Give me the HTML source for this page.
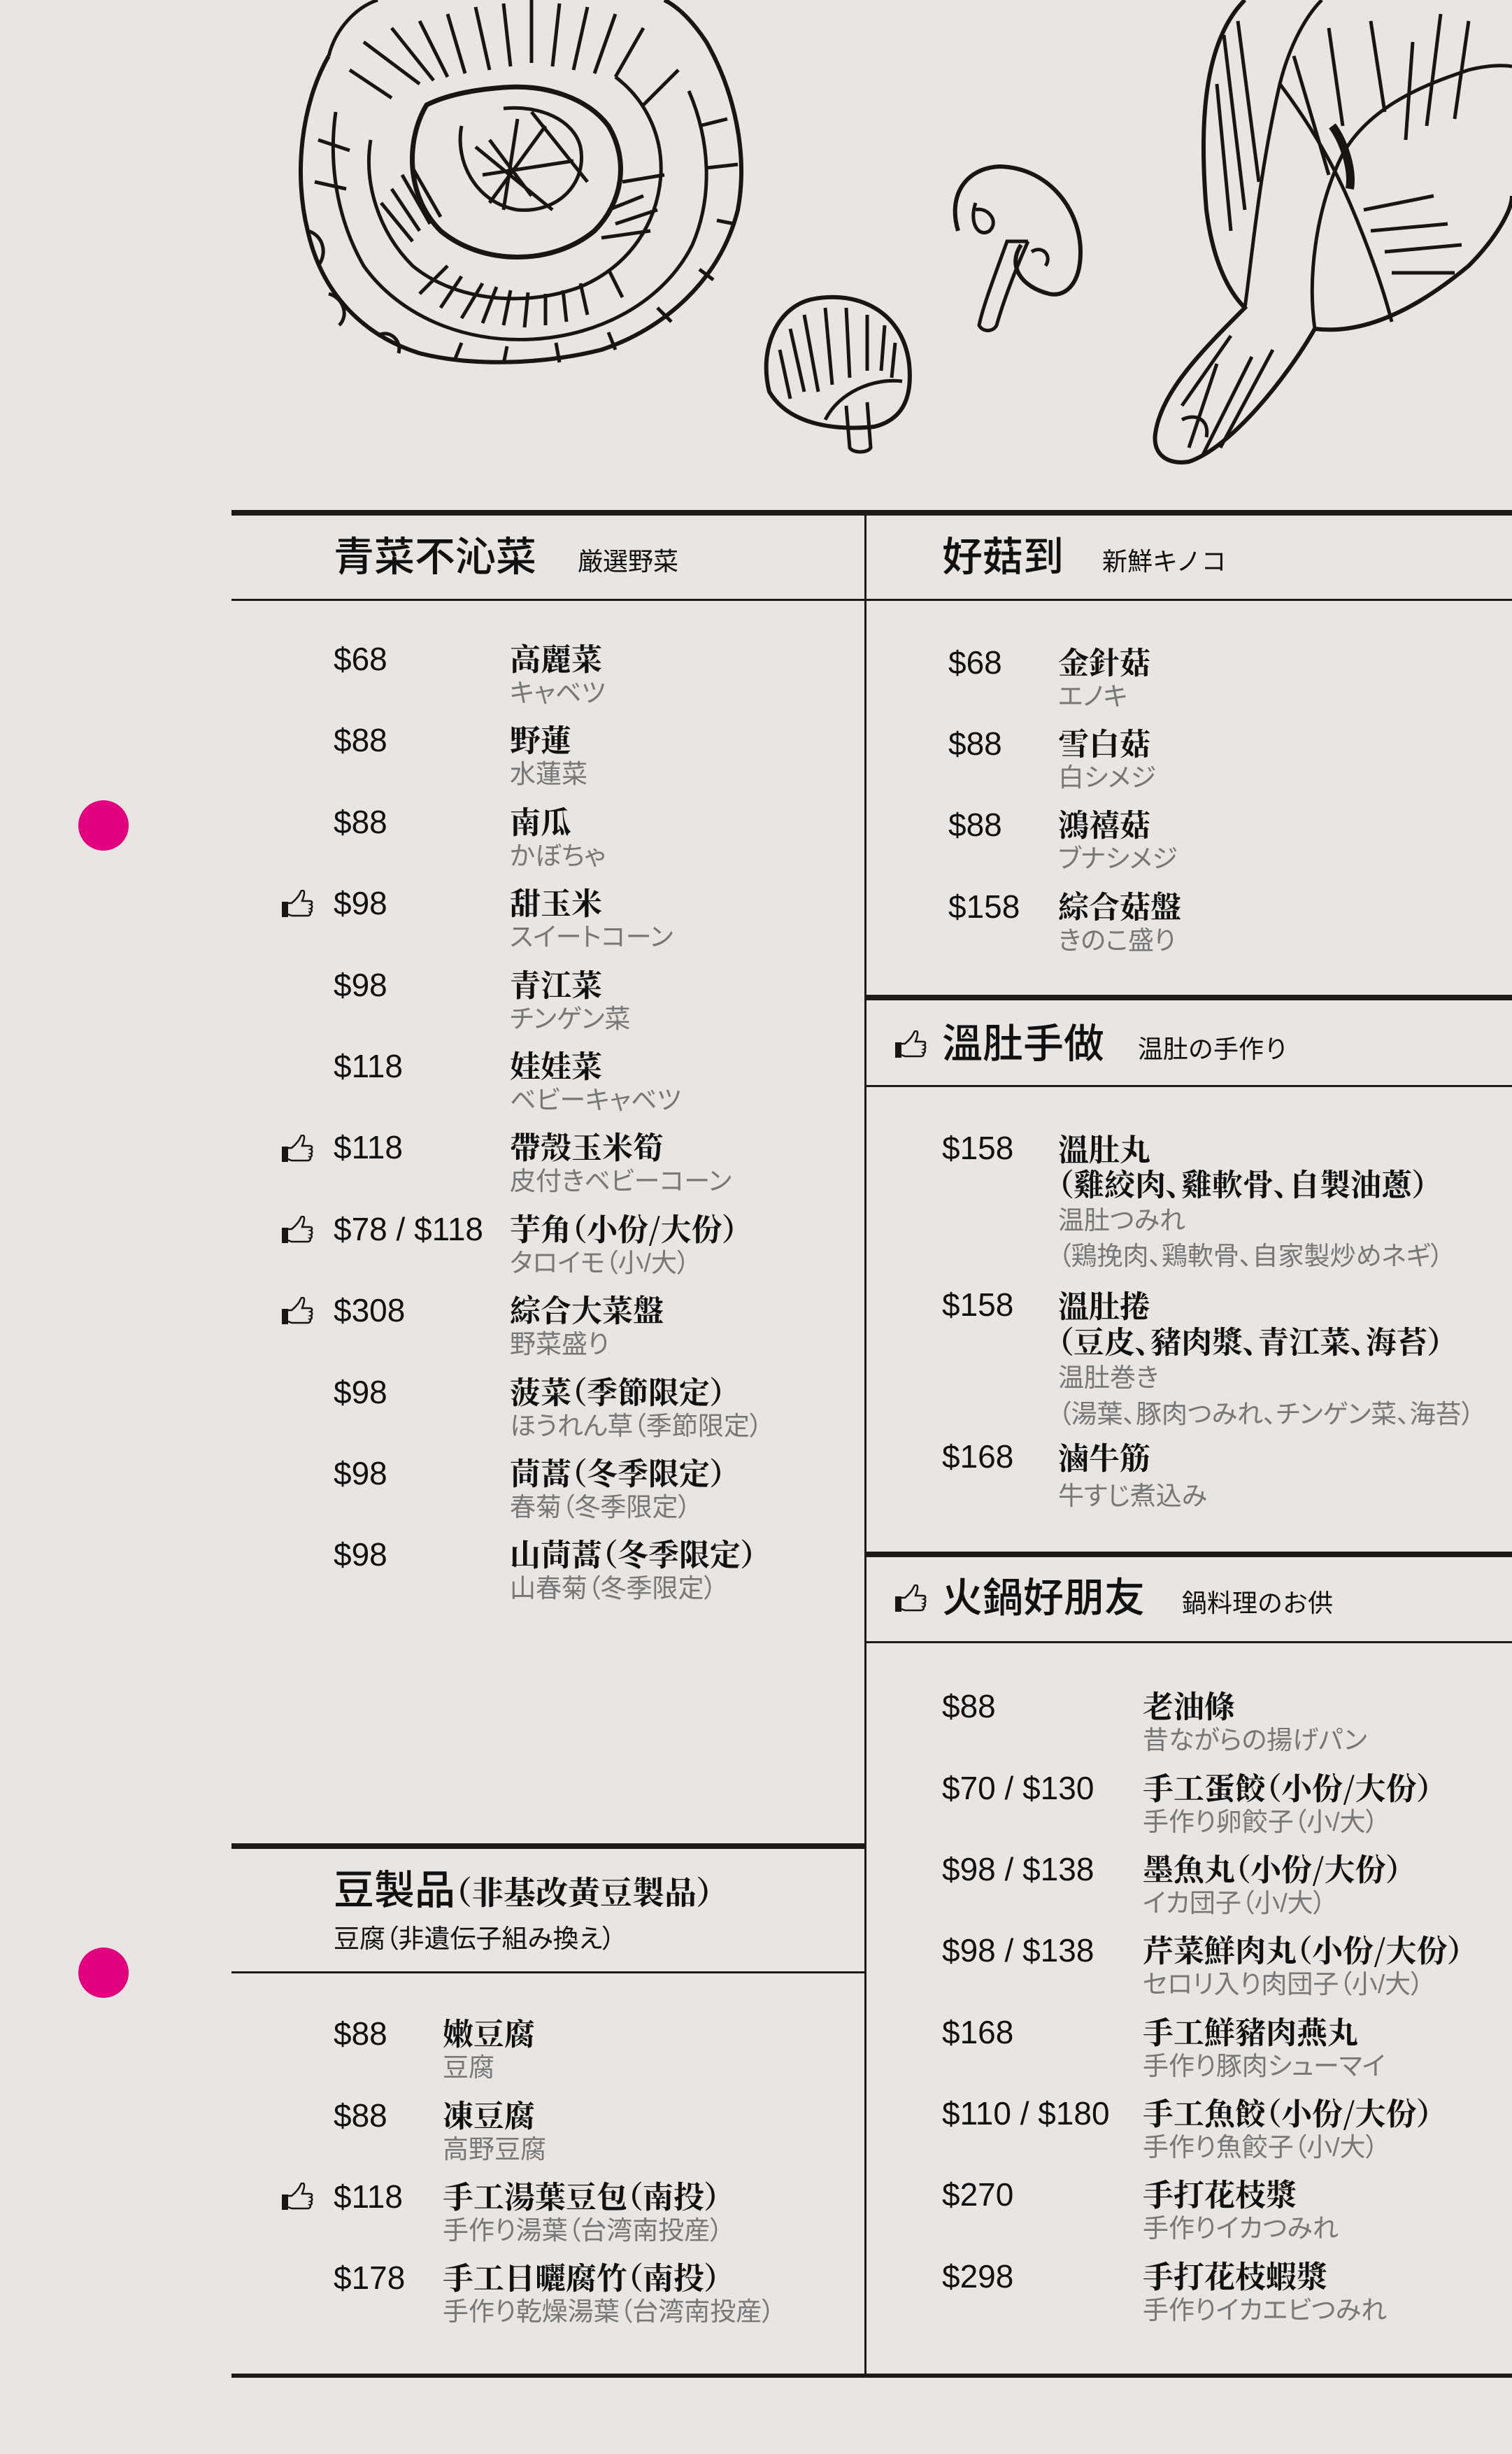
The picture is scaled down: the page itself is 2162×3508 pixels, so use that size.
<!DOCTYPE html>
<html><head><meta charset="utf-8">
<style>
*{margin:0;padding:0;box-sizing:border-box}
html,body{width:2162px;height:3508px;background:#e8e5e2;overflow:hidden}
body{position:relative;font-family:"Liberation Sans","Noto Sans CJK TC",sans-serif;color:#111}
.a{position:absolute;white-space:nowrap;line-height:1}
.p{font-size:46px;font-family:"Liberation Sans","Noto Sans CJK TC",sans-serif}
.n{font-size:44px;font-weight:bold;font-family:"Noto Serif CJK SC","Liberation Serif",serif;font-feature-settings:"palt"}
.s{font-size:37px;color:#777;font-family:"Liberation Sans","Noto Sans CJK JP",sans-serif;margin-top:6px;font-feature-settings:"palt"}
.t{font-size:58px;font-weight:500;font-family:"Liberation Sans","Noto Sans CJK TC",sans-serif}
.st{font-size:36px;font-family:"Liberation Sans","Noto Sans CJK JP",sans-serif}
.l{position:absolute;background:#1f1a19}
.dot{position:absolute;width:72px;height:72px;border-radius:50%;background:#e2007f}
.th{position:absolute;width:46px;height:40px}
</style></head><body>

<svg class="a" style="left:0;top:0" width="2162" height="700" viewBox="0 0 2162 700" fill="none" stroke="#1a1413" stroke-width="5">
 <g>
  <path d="M470,80 C430,150 420,250 440,330 C460,420 520,480 600,505 C680,525 780,520 860,500 C950,470 1030,400 1055,300 C1070,220 1050,130 1010,60 C990,30 970,10 950,0" stroke-width="6"/>
  <path d="M470,80 C480,40 510,10 540,0"/>
  <path d="M480,160 C470,230 480,310 520,380 C570,450 660,490 760,485 C860,480 950,430 990,350 C1020,280 1015,200 985,130"/>
  <path d="M530,200 C520,260 540,330 590,380 C650,430 750,440 830,410 C900,380 940,320 945,250 C948,190 920,140 880,110"/>
  <path d="M610,150 C580,200 580,280 630,330 C690,380 790,380 850,330 C890,290 900,230 870,180 C840,140 780,120 720,125 C680,128 640,135 610,150Z" stroke-width="7"/>
  <path d="M660,180 C650,230 680,290 740,300 C800,305 840,260 830,210 C820,170 770,150 720,155"/>
  <path d="M700,200 L760,280 M740,170 L720,300 M690,250 L820,230 M780,180 L700,290 M680,210 L790,300 M760,160 L840,260"/>
  <path d="M560,270 L600,330 M575,250 L615,320 M590,240 L630,310 M545,290 L590,345 M870,300 L920,280 M880,320 L940,300 M860,340 L930,330 M890,260 L950,250 M600,420 L640,380 M630,440 L660,395 M660,455 L690,405 M690,462 L710,410 M720,465 L730,415 M750,468 L755,418 M780,465 L780,420 M810,460 L805,415 M840,450 L830,405 M890,425 L870,385"/>
  <path d="M500,100 L560,140 M520,60 L600,120 M560,40 L620,115 M600,30 L640,110 M640,20 L665,105 M680,10 L700,100 M720,5 L730,95 M760,0 L760,90 M800,5 L790,95 M840,10 L820,100 M880,20 L850,105 M920,40 L880,110 M970,100 L920,150"/>
  <path d="M440,330 C460,335 470,360 455,380 M470,420 C490,425 500,450 485,465 M540,480 C555,470 575,485 570,505 M650,515 L660,490 M720,520 L725,495 M800,518 L795,490 M880,500 L870,475 M960,460 L940,440 M1020,400 L1000,385 M1050,320 L1025,315 M455,200 L500,215 M450,260 L495,270 M1000,180 L1040,170 M1010,240 L1055,235"/>
 </g>
 <g>
  <path d="M1100,560 C1085,500 1110,440 1160,428 C1220,415 1290,440 1300,520 C1305,570 1290,600 1250,610 C1200,615 1130,610 1100,560Z" stroke-width="6"/>
  <path d="M1180,600 C1200,560 1250,540 1290,545"/>
  <path d="M1210,580 L1215,640 C1220,648 1240,648 1245,640 L1240,575"/>
  <path d="M1130,470 L1150,560 M1150,450 L1170,560 M1180,440 L1190,550 M1210,440 L1215,540 M1240,450 L1240,530 M1265,465 L1260,530 M1115,500 L1130,570 M1280,490 L1275,540"/>
 </g>
 <g>
  <path d="M1370,330 C1355,280 1380,240 1430,238 C1500,240 1545,300 1545,360 C1545,410 1520,425 1500,420 C1460,410 1440,380 1460,350" stroke-width="6"/>
  <path d="M1395,290 C1385,320 1400,340 1415,330 C1430,315 1410,295 1395,300"/>
  <path d="M1470,345 L1440,345 C1420,400 1405,440 1400,465 C1405,475 1420,475 1425,465 C1435,430 1450,390 1470,345"/>
  <path d="M1475,360 C1490,350 1505,365 1495,380"/>
 </g>
 <g>
  <path d="M1780,0 C1720,60 1715,180 1725,300 C1735,380 1760,420 1780,440 C1720,500 1660,560 1652,620 C1648,650 1670,665 1700,660 C1760,640 1840,540 1880,470 C1960,480 2040,430 2100,380 C2140,340 2162,300 2162,280" stroke-width="6"/>
  <path d="M1780,440 C1790,370 1800,250 1830,120 C1845,60 1870,20 1890,0"/>
  <path d="M1830,120 C1860,160 1900,220 1930,290 C1960,360 1980,420 1990,460"/>
  <path d="M1880,470 C1870,400 1880,300 1920,220 C1960,150 2040,120 2100,100 C2140,90 2162,95 2162,95"/>
  <path d="M1750,50 L1780,300 M1770,30 L1800,260 M1740,120 L1760,330 M1850,80 L1900,250 M1900,40 L1920,180 M1960,30 L1980,160 M2020,60 L2010,200 M2060,20 L2040,180 M2100,30 L2080,170 M1950,300 L2050,280 M1960,330 L2070,320 M1980,360 L2090,350 M1990,390 L2080,390"/>
  <path d="M1690,600 C1710,590 1730,600 1725,625 M1700,640 L1740,520 M1720,650 L1790,510 M1745,640 L1820,500 M1690,580 L1760,480"/>
  <path d="M1905,180 C1920,200 1935,240 1930,270" stroke-width="12"/>
 </g>
</svg>

<div class="l" style="left:331px;top:729px;width:1831px;height:8px"></div>
<div class="l" style="left:331px;top:856px;width:1831px;height:3px"></div>
<div class="l" style="left:1236px;top:729px;width:3px;height:2670px"></div>
<div class="l" style="left:1238px;top:1422px;width:924px;height:8px"></div>
<div class="l" style="left:1238px;top:1551px;width:924px;height:3px"></div>
<div class="l" style="left:1238px;top:2218px;width:924px;height:8px"></div>
<div class="l" style="left:1238px;top:2346px;width:924px;height:3px"></div>
<div class="l" style="left:331px;top:2635px;width:907px;height:8px"></div>
<div class="l" style="left:331px;top:2818px;width:907px;height:3px"></div>
<div class="l" style="left:331px;top:3393px;width:1831px;height:6px"></div>

<div class="dot" style="left:112px;top:1144px"></div>
<div class="dot" style="left:112px;top:2784px"></div>

<svg width="0" height="0" style="position:absolute"><defs><g id="tu"><rect x="0" y="17" width="9" height="22" fill="#1a1413"/><path d="M9,19 L14,19 C20,14 25,8 27,3 C28,0 32,0 32,4 C32,9 30,13 29,16 L40,16 C44,16 44,20 41,21 C44,22 44,26 41,27 C44,28 43,32 40,32 C42,34 40,37 37,37 L14,37 L9,35" fill="none" stroke="#1a1413" stroke-width="2.5"/></g></defs></svg>
<svg class="th" style="left:403px;top:1272px" viewBox="0 0 46 40"><use href="#tu"/></svg>
<svg class="th" style="left:403px;top:1622px" viewBox="0 0 46 40"><use href="#tu"/></svg>
<svg class="th" style="left:403px;top:1738px" viewBox="0 0 46 40"><use href="#tu"/></svg>
<svg class="th" style="left:403px;top:1854px" viewBox="0 0 46 40"><use href="#tu"/></svg>
<svg class="th" style="left:403px;top:3120px" viewBox="0 0 46 40"><use href="#tu"/></svg>
<svg class="th" style="left:1280px;top:1473px" viewBox="0 0 46 40"><use href="#tu"/></svg>
<svg class="th" style="left:1280px;top:2265px" viewBox="0 0 46 40"><use href="#tu"/></svg>

<div class="a t" style="left:477px;top:768px">青菜不沁菜</div>
<div class="a st" style="left:826px;top:785px">厳選野菜</div>

<div class="a p" style="left:477px;top:919px">$68</div><div class="a n" style="left:729px;top:917px">高麗菜</div><div class="a s" style="left:729px;top:966px">キャベツ</div>
<div class="a p" style="left:477px;top:1035px">$88</div><div class="a n" style="left:729px;top:1033px">野蓮</div><div class="a s" style="left:729px;top:1082px">水蓮菜</div>
<div class="a p" style="left:477px;top:1152px">$88</div><div class="a n" style="left:729px;top:1150px">南瓜</div><div class="a s" style="left:729px;top:1199px">かぼちゃ</div>
<div class="a p" style="left:477px;top:1268px">$98</div><div class="a n" style="left:729px;top:1266px">甜玉米</div><div class="a s" style="left:729px;top:1315px">スイートコーン</div>
<div class="a p" style="left:477px;top:1385px">$98</div><div class="a n" style="left:729px;top:1383px">青江菜</div><div class="a s" style="left:729px;top:1432px">チンゲン菜</div>
<div class="a p" style="left:477px;top:1501px">$118</div><div class="a n" style="left:729px;top:1499px">娃娃菜</div><div class="a s" style="left:729px;top:1548px">ベビーキャベツ</div>
<div class="a p" style="left:477px;top:1617px">$118</div><div class="a n" style="left:729px;top:1615px">帶殼玉米筍</div><div class="a s" style="left:729px;top:1664px">皮付きベビーコーン</div>
<div class="a p" style="left:477px;top:1734px">$78 / $118</div><div class="a n" style="left:729px;top:1732px">芋角（小份/大份）</div><div class="a s" style="left:729px;top:1781px">タロイモ（小/大）</div>
<div class="a p" style="left:477px;top:1850px">$308</div><div class="a n" style="left:729px;top:1848px">綜合大菜盤</div><div class="a s" style="left:729px;top:1897px">野菜盛り</div>
<div class="a p" style="left:477px;top:1967px">$98</div><div class="a n" style="left:729px;top:1965px">菠菜（季節限定）</div><div class="a s" style="left:729px;top:2014px">ほうれん草（季節限定）</div>
<div class="a p" style="left:477px;top:2083px">$98</div><div class="a n" style="left:729px;top:2081px">茼蒿（冬季限定）</div><div class="a s" style="left:729px;top:2130px">春菊（冬季限定）</div>
<div class="a p" style="left:477px;top:2199px">$98</div><div class="a n" style="left:729px;top:2197px">山茼蒿（冬季限定）</div><div class="a s" style="left:729px;top:2246px">山春菊（冬季限定）</div>

<div class="a" style="left:477px;top:2674px"><span class="t">豆製品</span><span class="n" style="font-size:46px">（非基改黃豆製品）</span></div>
<div class="a" style="left:477px;top:2753px;font-size:37px;font-family:'Liberation Sans','Noto Sans CJK JP',sans-serif;font-feature-settings:'palt'">豆腐（非遺伝子組み換え）</div>
<div class="a p" style="left:477px;top:2884px">$88</div><div class="a n" style="left:633px;top:2882px">嫩豆腐</div><div class="a s" style="left:633px;top:2931px">豆腐</div>
<div class="a p" style="left:477px;top:3001px">$88</div><div class="a n" style="left:633px;top:2999px">凍豆腐</div><div class="a s" style="left:633px;top:3048px">高野豆腐</div>
<div class="a p" style="left:477px;top:3117px">$118</div><div class="a n" style="left:633px;top:3115px">手工湯葉豆包（南投）</div><div class="a s" style="left:633px;top:3164px">手作り湯葉（台湾南投産）</div>
<div class="a p" style="left:477px;top:3233px">$178</div><div class="a n" style="left:633px;top:3231px">手工日曬腐竹（南投）</div><div class="a s" style="left:633px;top:3280px">手作り乾燥湯葉（台湾南投産）</div>

<div class="a t" style="left:1347px;top:768px">好菇到</div>
<div class="a st" style="left:1576px;top:785px">新鮮キノコ</div>
<div class="a p" style="left:1356px;top:924px">$68</div><div class="a n" style="left:1513px;top:922px">金針菇</div><div class="a s" style="left:1513px;top:971px">エノキ</div>
<div class="a p" style="left:1356px;top:1040px">$88</div><div class="a n" style="left:1513px;top:1038px">雪白菇</div><div class="a s" style="left:1513px;top:1087px">白シメジ</div>
<div class="a p" style="left:1356px;top:1156px">$88</div><div class="a n" style="left:1513px;top:1154px">鴻禧菇</div><div class="a s" style="left:1513px;top:1203px">ブナシメジ</div>
<div class="a p" style="left:1356px;top:1273px">$158</div><div class="a n" style="left:1513px;top:1271px">綜合菇盤</div><div class="a s" style="left:1513px;top:1320px">きのこ盛り</div>

<div class="a t" style="left:1347px;top:1464px">溫肚手做</div>
<div class="a st" style="left:1627px;top:1482px">温肚の手作り</div>
<div class="a p" style="left:1347px;top:1618px">$158</div><div class="a n" style="left:1513px;top:1618px">溫肚丸</div>
<div class="a n" style="left:1513px;top:1668px">（雞絞肉、雞軟骨、自製油蔥）</div>
<div class="a s" style="left:1513px;top:1720px">温肚つみれ</div>
<div class="a s" style="left:1513px;top:1771px">（鶏挽肉、鶏軟骨、自家製炒めネギ）</div>
<div class="a p" style="left:1347px;top:1842px">$158</div><div class="a n" style="left:1513px;top:1842px">溫肚捲</div>
<div class="a n" style="left:1513px;top:1893px">（豆皮、豬肉漿、青江菜、海苔）</div>
<div class="a s" style="left:1513px;top:1945px">温肚巻き</div>
<div class="a s" style="left:1513px;top:1997px">（湯葉、豚肉つみれ、チンゲン菜、海苔）</div>
<div class="a p" style="left:1347px;top:2059px">$168</div><div class="a n" style="left:1513px;top:2059px">滷牛筋</div>
<div class="a s" style="left:1513px;top:2114px">牛すじ煮込み</div>

<div class="a t" style="left:1347px;top:2256px">火鍋好朋友</div>
<div class="a st" style="left:1690px;top:2274px">鍋料理のお供</div>
<div class="a p" style="left:1347px;top:2416px">$88</div><div class="a n" style="left:1634px;top:2414px">老油條</div><div class="a s" style="left:1634px;top:2463px">昔ながらの揚げパン</div>
<div class="a p" style="left:1347px;top:2533px">$70 / $130</div><div class="a n" style="left:1634px;top:2531px">手工蛋餃（小份/大份）</div><div class="a s" style="left:1634px;top:2580px">手作り卵餃子（小/大）</div>
<div class="a p" style="left:1347px;top:2649px">$98 / $138</div><div class="a n" style="left:1634px;top:2647px">墨魚丸（小份/大份）</div><div class="a s" style="left:1634px;top:2696px">イカ団子（小/大）</div>
<div class="a p" style="left:1347px;top:2765px">$98 / $138</div><div class="a n" style="left:1634px;top:2763px">芹菜鮮肉丸（小份/大份）</div><div class="a s" style="left:1634px;top:2812px">セロリ入り肉団子（小/大）</div>
<div class="a p" style="left:1347px;top:2882px">$168</div><div class="a n" style="left:1634px;top:2880px">手工鮮豬肉燕丸</div><div class="a s" style="left:1634px;top:2929px">手作り豚肉シューマイ</div>
<div class="a p" style="left:1347px;top:2998px">$110 / $180</div><div class="a n" style="left:1634px;top:2996px">手工魚餃（小份/大份）</div><div class="a s" style="left:1634px;top:3045px">手作り魚餃子（小/大）</div>
<div class="a p" style="left:1347px;top:3114px">$270</div><div class="a n" style="left:1634px;top:3112px">手打花枝漿</div><div class="a s" style="left:1634px;top:3161px">手作りイカつみれ</div>
<div class="a p" style="left:1347px;top:3231px">$298</div><div class="a n" style="left:1634px;top:3229px">手打花枝蝦漿</div><div class="a s" style="left:1634px;top:3278px">手作りイカエビつみれ</div>

</body></html>
